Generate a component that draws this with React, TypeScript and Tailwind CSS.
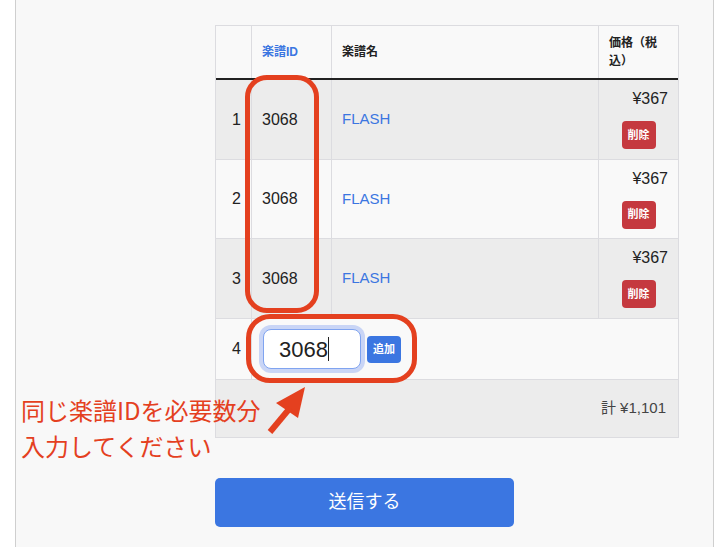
import React from "react";

const font = { fontFamily: '"Liberation Sans", "Noto Sans CJK JP", sans-serif' };

type Item = { no: number; id: string; name: string; price: string };

const items: Item[] = [
  { no: 1, id: "3068", name: "FLASH", price: "¥367" },
  { no: 2, id: "3068", name: "FLASH", price: "¥367" },
  { no: 3, id: "3068", name: "FLASH", price: "¥367" },
];

function ItemRow({ item, striped, h }: { item: Item; striped: boolean; h: string }) {
  return (
    <div className={`flex border-b border-[#dcdce0] ${h} ${striped ? "bg-[#ececec]" : "bg-[#f9f9f9]"}`}>
      <div className="w-[35px] shrink-0 flex items-center justify-end pr-[10px] text-[16px] text-[#222]">{item.no}</div>
      <div className="w-[80px] shrink-0 border-l border-[#dcdce0] flex items-center pl-[10px] text-[16px] text-[#222]">{item.id}</div>
      <div className="flex-1 border-l border-[#dcdce0] flex items-center pl-[10px] text-[15px] text-[#3b76e1]">{item.name}</div>
      <div className="w-[80px] shrink-0 border-l border-[#dcdce0] flex flex-col justify-center gap-[13px]">
        <div className="text-right pr-[10px] text-[16px] leading-[18px] text-[#222]">{item.price}</div>
        <div className="flex justify-center">
          <button className="w-[34px] h-[28px] rounded-[4px] bg-[#c5393f] text-white text-[11px] font-semibold">削除</button>
        </div>
      </div>
    </div>
  );
}

export default function App() {
  return (
    <div className="relative w-[726px] h-[547px] bg-white overflow-hidden" style={font}>
      <div className="ml-[15px] w-[699px] h-full border-x border-[#cfcfcf] bg-[#f8f8f8] pt-[25px] pl-[199px]">
        {/* cart table */}
        <div className="w-[464px] border border-[#dcdce0]">
          <div className="flex h-[54px] border-b-2 border-[#222] bg-[#f9f9f9] text-[12px] font-bold leading-[18px]">
            <div className="w-[35px] shrink-0" />
            <div className="w-[80px] shrink-0 border-l border-[#dcdce0] flex items-center pl-[10px] text-[#3b76e1]">楽譜ID</div>
            <div className="flex-1 border-l border-[#dcdce0] flex items-center pl-[10px] text-[#222]">楽譜名</div>
            <div className="w-[80px] shrink-0 border-l border-[#dcdce0] flex items-center px-[10px] text-[#222]">価格（税込）</div>
          </div>

          <ItemRow item={items[0]} striped h="h-[80px]" />
          <ItemRow item={items[1]} striped={false} h="h-[79px]" />
          <ItemRow item={items[2]} striped h="h-[80px]" />

          {/* new item input */}
          <div className="flex h-[61px] border-b border-[#dcdce0] bg-[#f9f9f9]">
            <div className="w-[35px] shrink-0 flex items-center justify-end pr-[10px] text-[16px] text-[#222]">4</div>
            <div className="flex-1 border-l border-[#dcdce0] flex items-center pl-[11px]">
              <div className="w-[98px] h-[40px] rounded-[8px] border border-[#80a4f0] bg-white ring-4 ring-[#c9d5f6] flex items-center pl-[15px] text-[22px] text-[#222]">
                3068<span className="w-px h-[24px] bg-[#222]" />
              </div>
              <button className="ml-[6px] w-[34px] h-[27px] rounded-[4px] bg-[#3b76e1] text-white text-[11px] font-semibold">追加</button>
            </div>
          </div>

          <div className="flex h-[57px] items-center justify-end pr-[12px] bg-[#ececec] text-[15px] text-[#444]">
            計 ¥1,101
          </div>
        </div>

        <button className="mt-[40px] w-[299px] h-[49px] rounded-[5px] bg-[#3b76e1] text-white text-[18px]">
          送信する
        </button>
      </div>

      {/* annotations */}
      <div className="absolute left-[245px] top-[75px] w-[74px] h-[238px] rounded-[22px] border-[5px] border-[#e4401f]" />
      <div className="absolute left-[246px] top-[314px] w-[171px] h-[69px] rounded-[24px] border-[5px] border-[#e4401f]" />
      <svg className="absolute left-0 top-0" width="726" height="547">
        <polygon points="305,387 276,403 298,418" fill="#e4401f" />
        <line x1="290" y1="408" x2="270" y2="432" stroke="#e4401f" strokeWidth="6" />
      </svg>
      <div
        className="absolute left-[21px] top-[392px] text-[24px] leading-[36px] text-[#e4401f]"
        style={{ fontFamily: '"Noto Sans CJK JP", sans-serif' }}
      >
        同じ楽譜IDを必要数分
        <br />
        入力してください
      </div>
    </div>
  );
}
